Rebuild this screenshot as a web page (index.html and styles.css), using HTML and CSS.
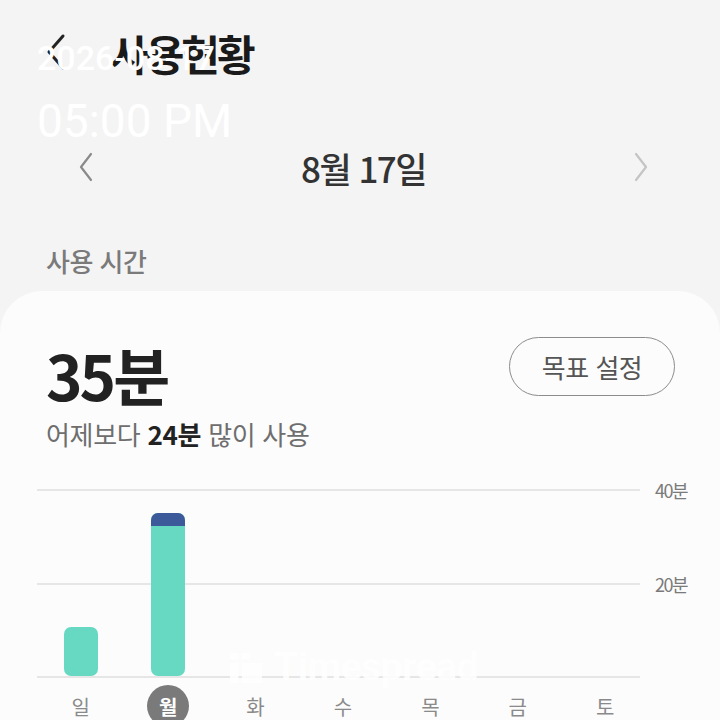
FILE: index.html
```html
<!DOCTYPE html>
<html lang="ko">
  <head>
    <meta charset="UTF-8" />
    <meta name="viewport" content="width=device-width, initial-scale=1.0" />
    <title>사용현황</title>
    <link rel="stylesheet" href="styles.css">
  </head>
  <body>
    <header class="topbar">
      <svg class="back" width="24" height="38" viewBox="0 0 24 38">
        <path d="M17 3 L3 19 L17 35" fill="none" stroke="#222" stroke-width="3" stroke-linecap="round" stroke-linejoin="round" />
      </svg>
      <h1>사용현황</h1>
    </header>

    <nav class="date-nav">
      <svg class="chev" width="14" height="30" viewBox="0 0 14 30">
        <path d="M12 2 L2 15 L12 28" fill="none" stroke="#8a8a8a" stroke-width="2.2" stroke-linecap="round" stroke-linejoin="round" />
      </svg>
      <span class="date">8월 17일</span>
      <svg class="chev light" width="14" height="30" viewBox="0 0 14 30">
        <path d="M2 2 L12 15 L2 28" fill="none" stroke="#c4c4c4" stroke-width="2.2" stroke-linecap="round" stroke-linejoin="round" />
      </svg>
    </nav>

    <p class="section-label">사용 시간</p>

    <section class="card">
      <div class="summary">
        <div>
          <div class="total">35분</div>
          <p class="compare">어제보다 <b>24분</b> 많이 사용</p>
        </div>
        <button class="goal">목표 설정</button>
      </div>

      <div class="chart">
        <div class="plot">
          <div class="col"><div class="bar" style="height: 49px"></div></div>
          <div class="col"><div class="bar" style="height: 163px"><span class="bar-top"></span></div></div>
          <div class="col"></div>
          <div class="col"></div>
          <div class="col"></div>
          <div class="col"></div>
          <div class="col"></div>
        </div>
        <div class="axis">
          <span>40분</span>
          <span>20분</span>
        </div>
      </div>

      <div class="days">
        <span>일</span>
        <span><i class="today">월</i></span>
        <span>화</span>
        <span>수</span>
        <span>목</span>
        <span>금</span>
        <span>토</span>
      </div>
    </section>

    <div class="stamp">
      <div class="stamp-date">2026-08-17</div>
      <div class="stamp-time">05:00 PM</div>
    </div>

    <div class="watermark">
      <svg width="32" height="32" viewBox="0 0 30 30">
        <rect x="0" y="2" width="8" height="6" fill="#fff" />
        <rect x="11" y="2" width="8" height="6" fill="#fff" />
        <rect x="0" y="11" width="8" height="19" fill="#fff" />
        <rect x="11" y="11" width="19" height="19" fill="#fff" />
      </svg>
      <span>Timespread</span>
    </div>
  </body>
</html>
```

FILE: styles.css
```css
/* Base */
body {
  margin: 0;
  width: 720px;
  height: 720px;
  overflow: hidden;
  position: relative;
  background: #f4f4f4;
  color: #222;
  font-family: "Noto Sans CJK KR", "Noto Sans", sans-serif;
}

/* Header */
.topbar {
  display: flex;
  align-items: center;
  height: 60px;
  padding: 22px 0 0 46px;
}
.back {
  margin-right: 40px;
}
h1 {
  margin: 0;
  font-size: 42px;
  font-weight: 700;
  letter-spacing: -3px;
  color: #1a1a1a;
}

/* Date navigation */
.date-nav {
  display: flex;
  align-items: center;
  justify-content: space-between;
  padding: 0 72px 0 79px;
  margin-top: 68px;
  height: 34px;
}
.date {
  font-size: 35px;
  font-weight: 500;
  letter-spacing: -1.5px;
  color: #333;
}

.section-label {
  margin: 58px 0 0 46px;
  font-size: 26px;
  font-weight: 500;
  color: #7a7a7a;
  letter-spacing: -0.5px;
}

/* Card */
.card {
  margin-top: 12px;
  background: #fcfcfc;
  border-radius: 42px 42px 0 0;
  padding: 44px 0 0 37px;
  height: 400px;
}
.summary {
  display: flex;
  justify-content: space-between;
  align-items: flex-start;
  box-sizing: border-box;
  width: 638px;
  padding-left: 9px;
}
.total {
  margin-top: 1px;
  font-size: 62px;
  font-weight: 700;
  line-height: 76px;
  letter-spacing: -3px;
  color: #222;
}
.compare {
  margin: 3px 0 0;
  font-size: 26px;
  color: #6e6e6e;
  letter-spacing: -0.3px;
}
.compare b {
  color: #222;
}
.goal {
  margin-top: 2px;
  width: 166px;
  height: 59px;
  border: 1.5px solid #8c8c8c;
  border-radius: 30px;
  background: transparent;
  font-family: inherit;
  font-size: 26px;
  color: #555;
  letter-spacing: -0.5px;
}

/* Chart */
.chart {
  display: flex;
  margin-top: 37px;
}
.plot {
  display: flex;
  align-items: flex-end;
  width: 612px;
  height: 189px;
  background:
    linear-gradient(#e6e6e6, #e6e6e6) 0 0 / 603px 2px no-repeat,
    linear-gradient(#e6e6e6, #e6e6e6) 0 94px / 603px 2px no-repeat,
    linear-gradient(#e6e6e6, #e6e6e6) 0 187px / 603px 2px no-repeat;
}
.col {
  flex: 1;
  display: flex;
  justify-content: center;
  align-items: flex-end;
  height: 100%;
  padding-bottom: 2px;
  box-sizing: border-box;
}
.bar {
  width: 34px;
  background: #67d9c3;
  border-radius: 7px;
  overflow: hidden;
}
.bar-top {
  display: block;
  height: 13px;
  background: #3c5a9a;
}
.axis {
  display: flex;
  flex-direction: column;
  gap: 68px;
  margin: -12px 0 0 6px;
  font-size: 18px;
  color: #7a7a7a;
  letter-spacing: -1.5px;
  white-space: nowrap;
}

.days {
  display: flex;
  width: 612px;
  margin-top: 7px;
}
.days span {
  flex: 1;
  display: flex;
  justify-content: center;
  align-items: center;
  height: 42px;
  font-size: 20px;
  color: #8a8a8a;
}
.days .today {
  display: flex;
  justify-content: center;
  align-items: center;
  width: 42px;
  height: 42px;
  border-radius: 50%;
  background: #7a7a7a;
  color: #fff;
  font-style: normal;
  font-weight: 700;
}

/* Overlays */
.stamp {
  position: absolute;
  left: 37px;
  top: 38px;
  color: #fff;
  font-family: Roboto, "Liberation Sans", sans-serif;
}
.stamp-date {
  font-size: 34px;
  font-weight: 500;
}
.stamp-time {
  margin-top: 16px;
  font-size: 46px;
}
.watermark {
  position: absolute;
  left: 230px;
  top: 644px;
  display: flex;
  align-items: center;
  gap: 12px;
  opacity: 0.85;
  color: #fff;
  font-family: Roboto, "Liberation Sans", sans-serif;
  font-size: 39px;
  font-weight: 700;
  letter-spacing: -0.5px;
}
```
